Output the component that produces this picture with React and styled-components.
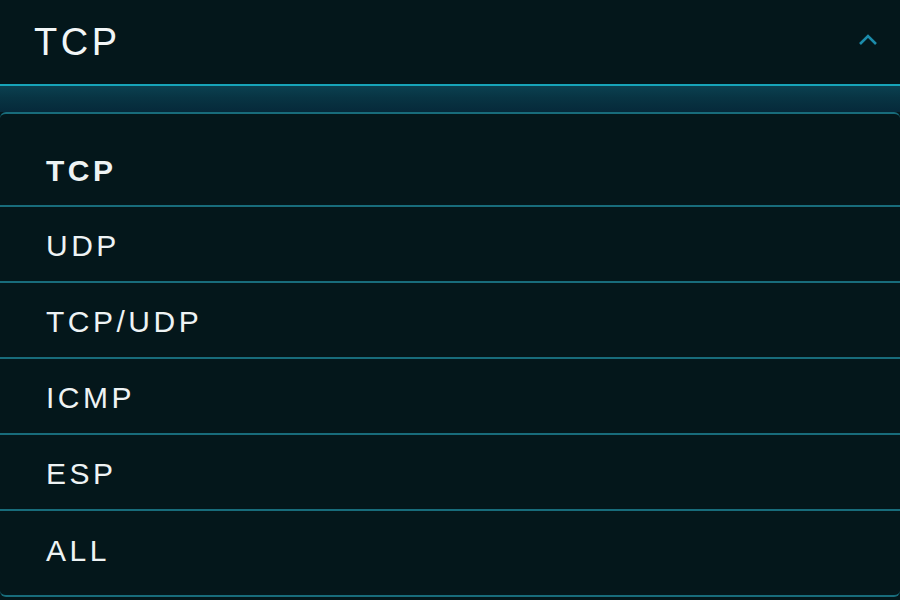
import React from "react";
import styled, { createGlobalStyle } from "styled-components";

const GlobalStyle = createGlobalStyle`
  html, body {
    margin: 0;
    padding: 0;
    background: #04171b;
  }
  body {
    font-family: "Liberation Sans", Arial, sans-serif;
  }
`;

const Page = styled.div`
  min-height: 100vh;
  background: #04171b;
  display: flex;
  flex-direction: column;
`;

const Header = styled.div`
  height: 84px;
  display: flex;
  align-items: center;
  justify-content: space-between;
  padding: 0 22px 0 34px;
  border-bottom: 2px solid #17a4b9;
`;

const Value = styled.span`
  color: #f2f6f7;
  font-size: 38px;
  letter-spacing: 3.5px;
  line-height: 1;
`;

const Chevron = styled.svg`
  width: 20px;
  height: 12px;
  margin-top: -4px;
`;

const Glow = styled.div`
  height: 26px;
  background: linear-gradient(to bottom, #0b4050 0%, #083443 45%, #06293a 100%);
`;

const Panel = styled.ul`
  list-style: none;
  margin: 0;
  padding: 19px 0 8px;
  border-top: 2px solid #186c7b;
  border-bottom: 2px solid #186c7b;
  border-radius: 6px;
`;

const Option = styled.li`
  height: 74px;
  display: flex;
  align-items: center;
  padding: 4px 0 0 46px;
  box-sizing: border-box;
  color: #eef3f4;
  font-size: 30px;
  letter-spacing: 3.5px;
  font-weight: ${p => (p.selected ? 700 : 400)};
  border-bottom: ${p => (p.last ? "none" : "2px solid #186c7b")};
  & + & {
    height: 76px;
  }
`;

const options = ["TCP", "UDP", "TCP/UDP", "ICMP", "ESP", "ALL"];

export default function App() {
  const selected = "TCP";
  return (
    <Page>
      <GlobalStyle />
      <Header>
        <Value>{selected}</Value>
        <Chevron viewBox="0 0 20 12">
          <path d="M2 10 L10 2 L18 10" fill="none" stroke="#1c8cab" strokeWidth="2.6" />
        </Chevron>
      </Header>
      <Glow />
      <Panel>
        {options.map((o, i) => (
          <Option key={o} selected={o === selected} last={i === options.length - 1}>
            {o}
          </Option>
        ))}
      </Panel>
    </Page>
  );
}
